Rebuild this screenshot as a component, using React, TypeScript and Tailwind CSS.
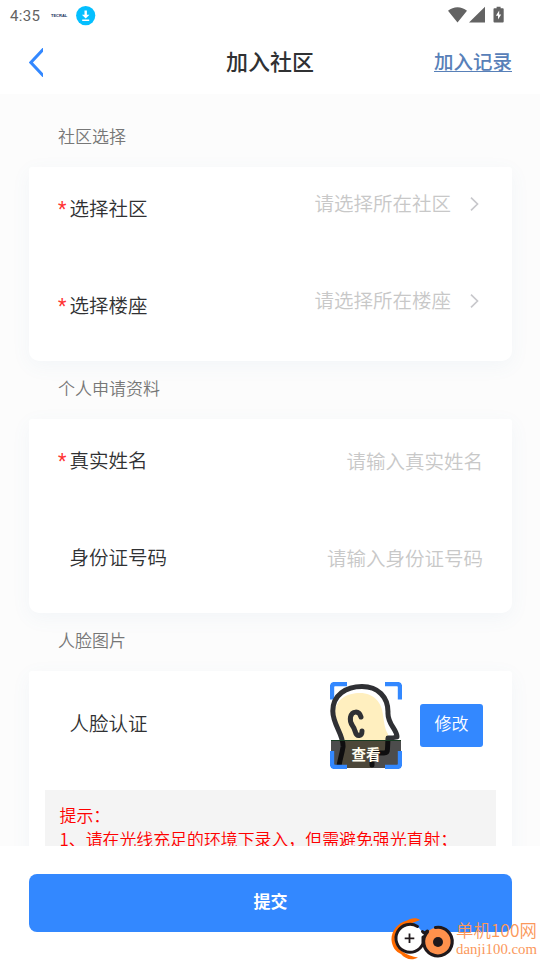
import type { ReactNode } from 'react';

const communityFields = [
  { label: '选择社区', placeholder: '请选择所在社区' },
  { label: '选择楼座', placeholder: '请选择所在楼座' },
];

const personalFields = [
  { label: '真实姓名', placeholder: '请输入真实姓名', required: true },
  { label: '身份证号码', placeholder: '请输入身份证号码', required: false },
];

const StatusBar = () => (
  <div className="flex h-8 items-center pl-[10px] pr-[35px] text-[#636363]">
    <span className="w-[41px] font-['Roboto'] text-[15px] leading-8 font-normal tracking-[0.3px]">4:35</span>
    <span className="w-[25px] font-['Liberation_Sans'] text-[4px] leading-[4px] font-bold text-[#16305c]">TECRAL</span>
    {/* Download notification */}
    <svg width="20" height="20" viewBox="0 0 20 20">
      <circle cx="9.7" cy="9.6" r="9.6" fill="#04bfff" />
      <path d="M8.5 4.5h2.4v4.2h2.6L9.7 12.6 5.9 8.7h2.6zM6.2 13.5h7V15h-7z" fill="#fff" />
    </svg>
    <svg className="ml-auto -mt-[3px]" width="57" height="18" viewBox="0 0 57 18" fill="#636363">
      <path d="M0 4.7C5.6 0 13.4 0 19 4.7L9.5 16.5zM37 .8V16.5H21zM48.6.8h4v1.5h2.2q.9 0 .9.9v12.4q0 .9-.9.9h-8.4q-.9 0-.9-.9V3.2q0-.9.9-.9h2.2z" />
      <path d="M51.2 4.6v4h2l-3.2 5v-3.9h-2.1z" fill="#fff" />
    </svg>
  </div>
);

const Header = () => (
  <header className="flex h-[62px] items-center pb-[2px] pl-[29px] pr-7">
    <button aria-label="返回" className="w-[100px]">
      <svg width="14" height="29" viewBox="0 0 14 29" fill="none" stroke="#3388ff" strokeWidth="3">
        <path d="M15 .5L1.9 14.5 15 28.5" />
      </svg>
    </button>
    <h1 className="flex-1 pb-[5px] text-center text-[22px] leading-[30px] font-medium text-[#303133]">加入社区</h1>
    <a className="w-[101px] pb-[2px] text-right text-[19.5px] leading-[28px] font-medium text-[#5880b8] underline decoration-1 underline-offset-[2px]">加入记录</a>
  </header>
);

const Section = ({ title, children }: { title: string; children: ReactNode }) => (
  <section>
    <h2 className="h-[58px] pl-[29px] pt-[13.5px] text-[17px] leading-[25px] text-[#777]">{title}</h2>
    <div className="rounded-t-[3px] rounded-b-[10px] bg-white shadow-[0_5px_20px_rgba(80,130,190,0.06)]">{children}</div>
  </section>
);

const Label = ({ text, required }: { text: string; required?: boolean }) => (
  <div className="flex h-[83px] items-center text-[19.5px] text-[#303133]">
    <span className="w-[11.5px] pt-[3px] font-['Roboto'] font-normal text-[#ff3333]">{required ? '*' : ''}</span>
    <span className="-mt-px">{text}</span>
  </div>
);

const App = () => (
  <div className="flex h-[960px] w-[540px] flex-col overflow-hidden bg-white font-['Noto_Sans_CJK_SC',sans-serif] font-[350]">
    <StatusBar />
    <Header />

    <main className="h-[752px] overflow-hidden bg-[#fcfcfc] pl-[29px] pr-7 pt-[15px]">
      <Section title="社区选择">
        {communityFields.map((field) => (
          <div key={field.label} className="flex h-[97px] items-start justify-between px-[29px]">
            <Label text={field.label} required />
            <div className="flex h-[73px] items-center text-[19.5px] text-[#c8c8c8]">
              <span className="-mt-px">{field.placeholder}</span>
              <svg className="ml-[19px] mr-1" width="9" height="14" viewBox="0 0 9 14" fill="none" stroke="#c8c8cc" strokeWidth="1.7">
                <path d="M1 .7L7.5 7 1 13.3" />
              </svg>
            </div>
          </div>
        ))}
      </Section>

      <Section title="个人申请资料">
        {personalFields.map((field) => (
          <div key={field.label} className="flex h-[97px] items-start justify-between px-[29px]">
            <Label text={field.label} required={field.required} />
            <span className="flex h-[84px] items-center text-[19.5px] text-[#c8c8c8]">{field.placeholder}</span>
          </div>
        ))}
      </Section>

      <Section title="人脸图片">
        <div className="flex h-[119px] items-start px-[29px] pt-[11px]">
          <Label text="人脸认证" />
          <div className="relative ml-auto h-[87px] w-[72px]">
            <svg className="absolute inset-0" width="72" height="87" viewBox="0 0 72 87" fill="none">
              <path d="M2 17.5V5q0-3 3-3h12M55 2h12q3 0 3 3v12.5" stroke="#3388ff" strokeWidth="4.4" />
              <path d="M14 62C14 51 6 44 5 32 5 17 17 11 30 11 44 11 52 21 53 33 54 40 55 48 58 52L56 70H45L42 86H9Z" fill="#ffefbf" />
              <path
                d="M9 84C10 77 12 72 13 65 14 53 2.8 43 2.8 29 2.8 13 16 4.5 32 4.5 48 4.5 58 15 58 30 57 42 67 47 67 55Q64 56 58 56L57.5 67Q57.5 71 54 71H45Q42 71 42 75V83"
                stroke="#2f3034"
                strokeWidth="5"
                strokeLinecap="round"
                strokeLinejoin="round"
              />
              <path d="M31 35C29 28 22 29 20.5 35 19 43 24 43 25 49 27 56 32 54 32 49" stroke="#2f3034" strokeWidth="5" strokeLinecap="round" strokeLinejoin="round" />
            </svg>
            <div className="absolute bottom-px left-px h-7 w-[70px] border-t border-[#173b22] bg-black/70 text-center text-[14.5px] leading-[25px] font-bold text-[#fffdef]">
              查看
            </div>
            <svg className="absolute bottom-0 left-0" width="72" height="18" viewBox="0 0 72 18" fill="none" stroke="#3388ff" strokeWidth="4.4">
              <path d="M2 0v13q0 3 3 3h12M55 16h12q3 0 3-3V0" />
            </svg>
          </div>
          <button className="ml-[18px] mt-[22px] h-[43px] w-[63px] rounded-[3px] bg-[#3388ff] pb-[5px] text-[17px] text-white">修改</button>
        </div>
        <div className="mx-4 h-[150px] bg-[#f4f4f4] px-[14.5px] pt-[13px] text-[16.9px] leading-[24px] text-[#ff0000]">
          <p>提示：</p>
          <p>1、请在光线充足的环境下录入，但需避免强光直射；</p>
        </div>
      </Section>
    </main>

    <footer className="relative h-[114px] bg-white pl-[29px] pr-7 pt-7">
      <button className="h-[58px] w-full rounded-[8px] bg-[#3388ff] pb-1 text-[17px] font-bold text-white">提交</button>

      {/* Site badge over the lower right corner */}
      <div className="absolute bottom-0 right-0 h-[44px] w-[150px] text-[#fb985b]">
        <svg className="absolute left-0 top-0" width="66" height="44" viewBox="0 0 66 44" fill="none">
          <circle cx="19.5" cy="22.3" r="14" fill="#fff" />
          <path d="M30 4C27 1 20 2 17 4.500 7 7 1 16 1.500 24 2 31 6 36 11 38 15 43 22 45 28 41.500 17 40 7 34 5 25 4 15 10 10 19 9.500L22 7Z" fill="#ff6b00" />
          <path d="M27.500 10.500A14 14 0 1 0 33 27.500V21M32.500 15.500Q34 18 37.500 15" stroke="#20191c" strokeWidth="3" strokeLinecap="round" />
          <circle cx="48" cy="25.5" r="14" fill="#ff914c" />
          <path d="M45.500 11.500A14.300 14.300 0 1 1 37.500 15.800" stroke="#20191c" strokeWidth="3.2" strokeLinecap="round" />
          <circle cx="48" cy="26" r="5" fill="#20191c" />
          <path d="M19.500 17.500v9.500M14.700 22.300h9.600" stroke="#20191c" strokeWidth="1.8" />
        </svg>
        <div className="absolute left-[66px] top-[4px] text-[17.4px] leading-[20px] whitespace-nowrap">单机100网</div>
        <div className="absolute left-[66px] top-[25px] font-['Liberation_Serif'] text-[14.8px] leading-[17px] whitespace-nowrap">danji100.com</div>
      </div>
    </footer>
  </div>
);

export default App;
